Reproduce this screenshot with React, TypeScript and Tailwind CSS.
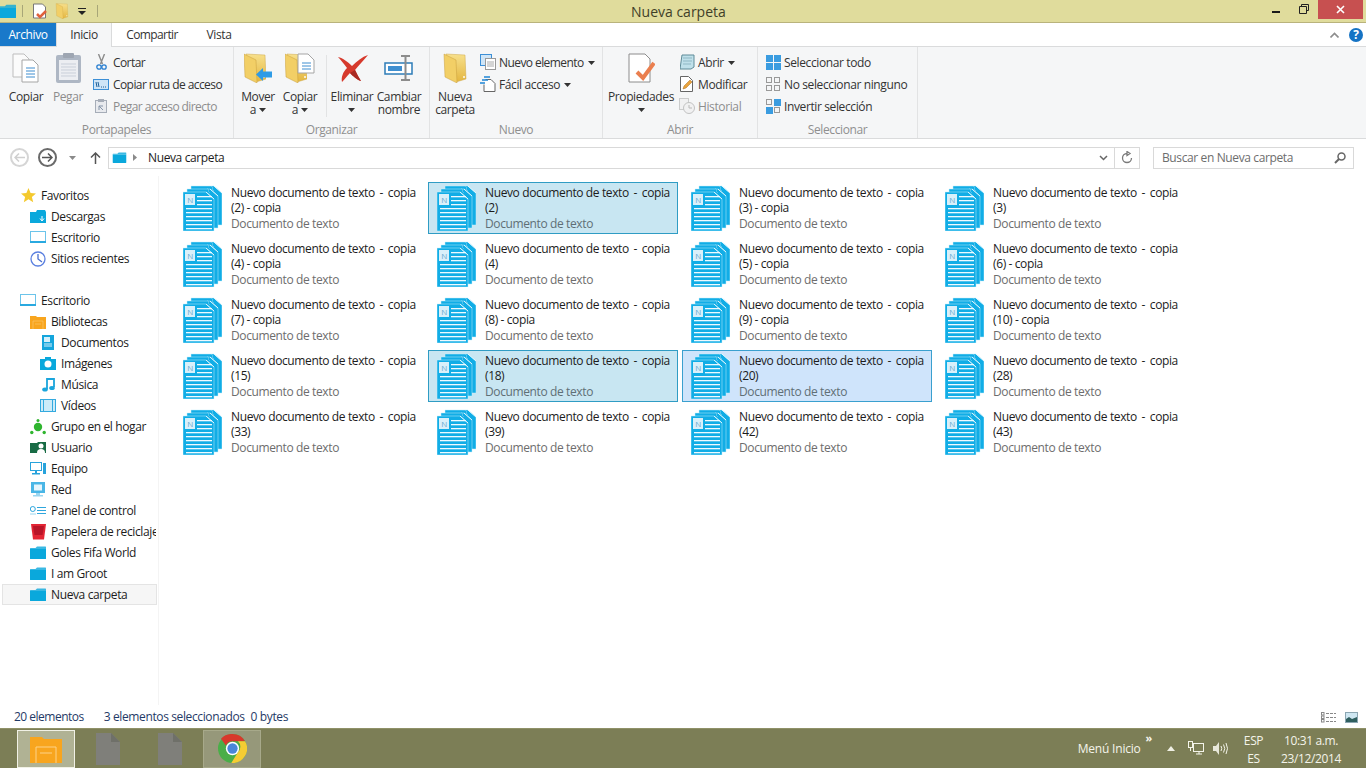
import React, { useId } from "react";

const F = "font-['Open_Sans','Noto_Sans',sans-serif] tracking-[-0.38px]";

function Caret({ c = "#333" }: { c?: string }) {
  return (
    <svg width="7" height="4" viewBox="0 0 7 4" className="inline-block shrink-0">
      <path d="M0 0h7L3.5 4z" fill={c} />
    </svg>
  );
}

function Folder({ w = 16, h = 13, c = "#0aa8dc" }: { w?: number; h?: number; c?: string }) {
  return (
    <svg width={w} height={h} viewBox="0 0 16 13" className="shrink-0">
      <path d="M0 2.5Q0 2 .5 2H5.5L7 .5h8.5q.5 0 .5.5V3H0z" fill={c} opacity=".8" />
      <path d="M0 3h16v9.5q0 .5-.5.5H.5Q0 13 0 12.5z" fill={c} />
    </svg>
  );
}

function YellowFolder({ w = 22, h = 30 }: { w?: number; h?: number }) {
  const id = useId();
  return (
    <svg width={w} height={h} viewBox="0 0 22 30">
      <defs>
        <linearGradient id={id} x1="0" y1="0" x2="0" y2="1">
          <stop offset="0" stopColor="#f7e08c" />
          <stop offset="1" stopColor="#e4b640" />
        </linearGradient>
      </defs>
      <path d="M2 1 21 2 22 26 12 29z" fill={`url(#${id})`} stroke="#cfa84a" strokeWidth=".5" />
      <path d="M0 1 12 7 13 30 1 24z" fill="#f2cf66" stroke="#c99f3f" strokeWidth=".5" />
      <path d="M19 23h2v2h-2z" fill="#fff" opacity=".7" />
    </svg>
  );
}

function DocStack() {
  const blue = "#11ade6";
  const sheet = (dx: number, dy: number, key: string) => (
    <path
      key={key}
      d={`M${dx} ${dy + 1}H${dx + 23}L${dx + 31} ${dy + 8}V${dy + 40}H${dx}z`}
      fill={blue}
      stroke="#c4ecfa"
      strokeWidth=".5"
    />
  );
  return (
    <svg width="39" height="46" viewBox="0 0 39 46" className="shrink-0">
      {sheet(8, 0, "a")}
      {sheet(4, 3, "b")}
      {sheet(0, 6, "c")}
      <path d="M23 7 31 14M27 4 35 11M31 1 39 8" stroke="#e6f8fe" strokeWidth="1" />
      <path d="M24 3l2 2-1 1 2 2M28 1l2 2-1 1 2 2" stroke="#7fd0ee" strokeWidth=".6" fill="none" />
      <rect x="2" y="9" width="10" height="11" fill="#d9f0fa" />
      <text x="7" y="17.800" textAnchor="middle" fontSize="8" fill="#6aa9cf" fontFamily="Open Sans">N</text>
      {[11, 15, 19].map((y) => (
        <rect key={y} x="14" y={y} width="15" height="1.300" fill="#eefaff" />
      ))}
      {[23, 27, 31, 35, 39, 43].map((y) => (
        <rect key={y} x="3" y={y} width="26" height="1.300" fill="#eefaff" />
      ))}
    </svg>
  );
}

function Item({ sub, selected, hot }: { sub: string; selected?: boolean; hot?: boolean }) {
  const cls = hot
    ? "border-[#3aa0cf] bg-[#cfe4fb]"
    : selected
      ? "border-[#2f9cc4] bg-[#c8e6f2]"
      : "border-transparent";
  return (
    <div className={`flex h-[52px] w-[250px] items-start border pl-[8px] pt-[1px] ${cls}`}>
      <div className="mt-[1px] h-[48px] w-[48px] shrink-0">
        <DocStack />
      </div>
      <div className="mt-[1px] flex flex-col text-[12px] leading-[15px] text-[#1c1c1c]">
        <span className="whitespace-nowrap">
          Nuevo documento de texto <span className="mx-[2px]">-</span> copia
        </span>
        <span className="whitespace-nowrap">{sub}</span>
        <span className={`mt-[1px] whitespace-nowrap ${selected || hot ? "text-[#5f6f76]" : "text-[#6d6d6d]"}`}>Documento de texto</span>
      </div>
    </div>
  );
}

const items: { sub: string; s?: boolean; h?: boolean }[] = [
  { sub: "(2) - copia" },
  { sub: "(2)", s: true },
  { sub: "(3) - copia" },
  { sub: "(3)" },
  { sub: "(4) - copia" },
  { sub: "(4)" },
  { sub: "(5) - copia" },
  { sub: "(6) - copia" },
  { sub: "(7) - copia" },
  { sub: "(8) - copia" },
  { sub: "(9) - copia" },
  { sub: "(10) - copia" },
  { sub: "(15)" },
  { sub: "(18)", s: true },
  { sub: "(20)", h: true },
  { sub: "(28)" },
  { sub: "(33)" },
  { sub: "(39)" },
  { sub: "(42)" },
  { sub: "(43)" },
];

function Large({
  icon,
  lines,
  inlineCaret,
  belowCaret,
  w,
  dim,
}: {
  icon: React.ReactNode;
  lines: string[];
  inlineCaret?: boolean;
  belowCaret?: boolean;
  w: number;
  dim?: boolean;
}) {
  return (
    <div className="flex shrink-0 flex-col items-center" style={{ width: w }}>
      <div className="flex h-[34px] items-center justify-center">{icon}</div>
      <div className={`mt-[5px] flex flex-col items-center text-[12px] leading-[13px] ${dim ? "text-[#8d8d8d]" : "text-[#333]"}`}>
        {lines.map((l, i) => (
          <span key={i} className="flex items-center gap-[3px] whitespace-nowrap">
            {l}
            {inlineCaret && i === lines.length - 1 ? <Caret /> : null}
          </span>
        ))}
        {belowCaret ? (
          <span className="flex h-[13px] items-center">
            <Caret />
          </span>
        ) : null}
      </div>
    </div>
  );
}

function Small({ icon, label, dim, caret, gap, tight }: { icon: React.ReactNode; label: string; dim?: boolean; caret?: boolean; gap?: boolean; tight?: boolean }) {
  return (
    <div className={`flex h-[22px] items-center whitespace-nowrap text-[12px] ${gap ? "gap-[4px]" : "gap-[3px]"} ${dim ? "text-[#8d8d8d]" : "text-[#333]"}`}>
      <span className="flex w-[16px] shrink-0 items-center justify-center">{icon}</span>
      <span className={`pt-[1px] ${tight ? "tracking-[-0.58px]" : ""}`}>{label}</span>
      {caret ? (
        <span className="ml-[1px] flex pt-[1px]">
          <Caret />
        </span>
      ) : null}
    </div>
  );
}

function Group({ w, label, children }: { w: number; label: string; children: React.ReactNode }) {
  return (
    <div className="flex h-full shrink-0 flex-col border-r border-[#e2e3e4]" style={{ width: w }}>
      <div className="flex h-[75px] pt-[4px]">{children}</div>
      <div className="text-center text-[12px] leading-[15px] text-[#8f8f8f]">{label}</div>
    </div>
  );
}

const IconCopy = (
  <svg width="28" height="30" viewBox="0 0 28 30">
    <path d="M1 1h11l5 5v18H1z" fill="#fbfbfb" stroke="#bdbdbd" />
    <path d="M10 7h11l5 5v17H10z" fill="#fff" stroke="#a5a5a5" />
    <path d="M14 15h9M14 18h9M14 21h9M14 24h9" stroke="#3e8ed0" strokeWidth="1.200" />
  </svg>
);
const IconPaste = (
  <svg width="25" height="30" viewBox="0 0 25 30">
    <rect x="0" y="2" width="25" height="28" rx="2" fill="#aeb7c4" />
    <rect x="3" y="7" width="19" height="20" fill="#eceef2" />
    <rect x="7" y="0" width="11" height="5" rx="1" fill="#9ea6b2" />
    <path d="M5 11h15M5 14h15M5 17h15M5 20h15M5 23h15" stroke="#c9cfd9" />
  </svg>
);
const IconScissors = (
  <svg width="11" height="16" viewBox="0 0 11 16">
    <path d="M2.500 0l4 10M8.500 0L4.500 10" stroke="#8c8c8c" strokeWidth="1.400" />
    <circle cx="3" cy="13" r="2.200" fill="none" stroke="#2a7fd0" strokeWidth="1.300" />
    <circle cx="8" cy="13" r="2.200" fill="none" stroke="#2a7fd0" strokeWidth="1.300" />
  </svg>
);
const IconPath = (
  <svg width="16" height="11" viewBox="0 0 16 11">
    <rect x=".5" y=".5" width="15" height="10" fill="#cfe5f7" stroke="#3c8fd6" />
    <path d="M3 3l1 5M5 3l1 5M8 8h1M10 8h1M12 8h1" stroke="#1e5f98" />
  </svg>
);
const IconPasteShort = (
  <svg width="12" height="14" viewBox="0 0 12 14">
    <rect x=".5" y="1.500" width="11" height="12" fill="#e8eaee" stroke="#a6adb8" />
    <rect x="3" y="0" width="6" height="3" fill="#a6adb8" />
    <path d="M4 11V7h4M4 7l4 4" stroke="#8494a8" fill="none" />
  </svg>
);
const IconMove = (
  <div className="relative h-[30px] w-[28px]">
    <YellowFolder />
    <svg width="16" height="13" viewBox="0 0 16 13" className="absolute bottom-[2px] right-0">
      <path d="M0 6.500 7 0V3.500H16V9.500H7V13z" fill="#2e9be6" />
    </svg>
  </div>
);
const IconCopyTo = (
  <div className="relative h-[30px] w-[30px]">
    <YellowFolder />
    <svg width="18" height="21" viewBox="0 0 18 21" className="absolute right-0 top-0">
      <path d="M1 1h10l6 6v13H1z" fill="#fff" stroke="#a5a5a5" />
      <path d="M5 10h9M5 13h9M5 16h9" stroke="#3e8ed0" />
    </svg>
  </div>
);
const IconDelete = (
  <svg width="31" height="27" viewBox="0 0 31 27">
    <path d="M1 2C6 3 11 7 15 11 20 6 25 2 31 0 27 5 22 10 18 15 20 19 22 23 24 26 20 25 16 21 13 18 10 21 8 24 5 27 4 22 6 17 10 13 7 9 4 5 1 2z" fill="#d6392c" />
    <path d="M13 18C16 21 20 25 24 26 22 23 20 19 18 15z" fill="#a92a22" />
  </svg>
);
const IconRename = (
  <svg width="30" height="26" viewBox="0 0 30 26">
    <rect x="1" y="8" width="27" height="11" fill="#fff" stroke="#2d7cb8" strokeWidth="1.500" />
    <rect x="4" y="11" width="14" height="5" fill="#3f8fd0" />
    <path d="M17 1h9M17 25h9M21.500 1v24" stroke="#8c8c8c" strokeWidth="2" />
  </svg>
);
const IconNewItem = (
  <svg width="16" height="16" viewBox="0 0 16 16">
    <rect x=".5" y=".5" width="11" height="11" fill="#cfe5f7" stroke="#3c8fd6" />
    <rect x="5.500" y="4.500" width="10" height="11" fill="#fff" stroke="#999" />
    <path d="M7 8h7M7 10h7M7 12h7" stroke="#aaa" />
  </svg>
);
const IconEasy = (
  <svg width="16" height="16" viewBox="0 0 16 16">
    <path d="M5.500 3.500H11l4 4v8H4v-7" fill="#fff" stroke="#666" />
    <path d="M0 7h5M2 4h6M4 1h6" stroke="#1f86d6" strokeWidth="1.300" />
  </svg>
);
const IconProps = (
  <svg width="27" height="30" viewBox="0 0 27 30">
    <path d="M1 1h16l5 5v23H1z" fill="#fff" stroke="#8c8c8c" />
    <path d="M9 19l6 6L26 10" fill="none" stroke="#ea7f4f" strokeWidth="4" />
  </svg>
);
const IconOpen = (
  <svg width="15" height="16" viewBox="0 0 15 16">
    <path d="M2 1h12v12L11 15H0z" fill="#bfe0ea" stroke="#5f8b98" />
    <path d="M3 4h9M3 7h9M3 10h8" stroke="#8fb7c4" />
  </svg>
);
const IconEdit = (
  <svg width="14" height="16" viewBox="0 0 14 16">
    <path d="M.5.500h8l4 4v11H.5z" fill="#fff" stroke="#666" />
    <path d="M3 13l1-3 6-6 2 2-6 6z" fill="#e9a33d" stroke="#a96c1e" strokeWidth=".5" />
  </svg>
);
const IconHistory = (
  <svg width="16" height="16" viewBox="0 0 16 16" opacity=".55">
    <rect x=".5" y=".5" width="9" height="11" fill="#eee" stroke="#aaa" />
    <circle cx="10" cy="10" r="5.500" fill="#eee" stroke="#999" />
    <path d="M10 7v3h3" stroke="#888" fill="none" />
  </svg>
);
function Grid4({ filled }: { filled: number[] }) {
  const pos = [
    [0, 0],
    [8, 0],
    [0, 8],
    [8, 8],
  ];
  return (
    <svg width="15" height="15" viewBox="0 0 15 15">
      {pos.map(([x, y], i) =>
        filled.includes(i) ? (
          <rect key={i} x={x} y={y} width="7" height="7" fill="#3a9ce0" />
        ) : (
          <rect key={i} x={x + 0.5} y={y + 0.5} width="5" height="5" fill="none" stroke="#999" />
        ),
      )}
    </svg>
  );
}

function SideRow({ level, icon, label, sel }: { level: 0 | 1 | 2; icon: React.ReactNode; label: string; sel?: boolean }) {
  const pad = level === 0 ? "pl-[17px]" : level === 1 ? "pl-[27px]" : "pl-[37px]";
  return (
    <div className={`ml-[2px] flex h-[21px] w-[155px] items-center overflow-hidden border ${pad} ${sel ? "border-[#e4e4e4] bg-[#f6f6f6]" : "border-transparent"}`}>
      <span className="flex w-[16px] shrink-0 items-center justify-center">{icon}</span>
      <span className="ml-[5px] whitespace-nowrap pt-[1px] text-[12px] text-[#1c1c1c]">{label}</span>
    </div>
  );
}

const Star = (
  <svg width="15" height="15" viewBox="0 0 15 15">
    <path d="M7.500 0l2.100 5 5.400.4-4.100 3.500 1.300 5.300-4.700-2.900-4.700 2.900 1.300-5.300L0 5.400 5.400 5z" fill="#f4c92e" />
  </svg>
);
const Monitor = (
  <svg width="16" height="13" viewBox="0 0 16 13">
    <rect x=".5" y=".5" width="15" height="11" fill="#fff" stroke="#6cc4ea" />
    <rect x="0" y="10" width="16" height="2" fill="#29a9e0" />
  </svg>
);
const Downloads = (
  <svg width="16" height="13" viewBox="0 0 16 13">
    <path d="M0 2h6l1-2h8l1 2v11H0z" fill="#0aa8dc" />
    <path d="M12 6v4M10 8.500l2 2.500 2-2.500" stroke="#fff" fill="none" />
  </svg>
);
const Clock = (
  <svg width="16" height="16" viewBox="0 0 16 16">
    <circle cx="8" cy="8" r="7" fill="#fff" stroke="#5b80e0" strokeWidth="1.300" />
    <path d="M8 3v5l4 3" fill="none" stroke="#4a6fd0" strokeWidth="1.300" />
  </svg>
);
const Docs = (
  <svg width="12" height="15" viewBox="0 0 12 15">
    <path d="M0 0h12v15H0z" fill="#14a5dc" />
    <rect x="2" y="2" width="6" height="5" fill="#d5f0fb" />
    <path d="M2 9h8M2 11h8" stroke="#d5f0fb" />
  </svg>
);
const Images = (
  <svg width="16" height="13" viewBox="0 0 16 13">
    <path d="M0 2h5V0h6v2h5v11H0z" fill="#0aa8dc" />
    <circle cx="8" cy="7" r="3.500" fill="#fff" />
  </svg>
);
const Music = (
  <svg width="13" height="15" viewBox="0 0 13 15">
    <path d="M5 12V2h7v8" fill="none" stroke="#1aa5dc" strokeWidth="1.800" />
    <ellipse cx="3" cy="12.500" rx="2.800" ry="2" fill="#1aa5dc" />
    <ellipse cx="10" cy="11" rx="2.800" ry="2" fill="#1aa5dc" />
  </svg>
);
const Video = (
  <svg width="16" height="13" viewBox="0 0 16 13">
    <rect x=".5" y=".5" width="15" height="12" fill="#cdebf8" stroke="#34aadf" />
    <path d="M3.500 1v11M12.500 1v11" stroke="#34aadf" />
  </svg>
);
const Home = (
  <svg width="16" height="16" viewBox="0 0 16 16">
    <circle cx="8" cy="8" r="4.200" fill="#2fb52f" />
    <circle cx="8" cy="1.500" r="1.500" fill="#2fb52f" />
    <circle cx="1.800" cy="13.500" r="1.700" fill="#2fb52f" />
    <circle cx="14.200" cy="13.500" r="1.700" fill="#2fb52f" />
  </svg>
);
const User = (
  <svg width="16" height="13" viewBox="0 0 16 13">
    <path d="M0 2h7l1-1h8v11H0z" fill="#186b45" />
    <circle cx="11" cy="5" r="2.500" fill="#fff" />
    <path d="M7 12c0-3 1.500-4 4-4s4 1 4 4z" fill="#fff" />
  </svg>
);
const Computer = (
  <svg width="16" height="14" viewBox="0 0 16 14">
    <rect x=".5" y=".5" width="11" height="8" fill="#fff" stroke="#28a3dc" />
    <path d="M2 11h8v1.500H2zM5 9h2v2H5z" fill="#28a3dc" />
    <rect x="13" y="1" width="3" height="11" fill="#28a3dc" />
  </svg>
);
const Net = (
  <svg width="14" height="15" viewBox="0 0 14 15">
    <rect x="0" y="0" width="14" height="11" fill="#4ab6e6" />
    <rect x="3" y="2.500" width="8" height="6" fill="#e6f5fc" />
    <path d="M5 11h4v2H5zM2 13h10v1.500H2z" fill="#9bd6f0" />
  </svg>
);
const Panel = (
  <svg width="16" height="9" viewBox="0 0 16 9">
    <circle cx="2.800" cy="3" r="2.500" fill="#fff" stroke="#2ea6dd" />
    <path d="M0 8h6" stroke="#9bd6f0" />
    <path d="M7 1.500h9M7 4.500h9M7 7.500h9" stroke="#2ea6dd" strokeWidth="1.200" />
  </svg>
);
const Trash = (
  <svg width="15" height="16" viewBox="0 0 15 16">
    <path d="M0 0h15l-2 15.500H2z" fill="#e32534" />
    <path d="M2 2h11l-1.500 9h-8z" fill="#b81528" />
  </svg>
);
function LibFolder({ w = 16, h = 14 }: { w?: number; h?: number }) {
  return (
    <svg width={w} height={h} viewBox="0 0 16 14">
      <path d="M0 1h6l1 1h9v12H0z" fill="#f8a51e" />
      <path d="M3 6h10v8M3 6v8M5 9h6" fill="none" stroke="#fdd287" strokeWidth=".5" />
    </svg>
  );
}

function GrayDoc() {
  return (
    <svg width="24" height="32" viewBox="0 0 24 32">
      <path d="M0 0H15L24 9V32H0z" fill="#7f7f7a" />
      <path d="M15 0 24 9H15z" fill="#6f7069" />
    </svg>
  );
}

function Chrome() {
  return (
    <svg width="29" height="29" viewBox="0 0 48 48">
      <circle cx="24" cy="24" r="24" fill="#4aae48" />
      <path d="M24 0A24 24 0 0 1 44.800 12H24a12 12 0 0 0-11 7L5 8A24 24 0 0 1 24 0z" fill="#d8382c" />
      <path d="M44.800 12A24 24 0 0 1 22 48L33 30a12 12 0 0 0 0-18z" fill="#f5cc33" />
      <circle cx="24" cy="24" r="11" fill="#fff" />
      <circle cx="24" cy="24" r="8.500" fill="#4a86d8" />
    </svg>
  );
}

export default function App() {
  return (
    <div className={`flex h-[768px] w-[1366px] flex-col overflow-hidden bg-white ${F}`}>
      {/* title bar */}
      <div className="relative flex h-[23px] shrink-0 items-center border-b border-[#b9b37c] bg-[#e0dc9c]">
        <div className="flex items-center">
          <span className="-ml-[1px] flex">
            <Folder w={17} h={14} />
          </span>
          <span className="ml-[6px] h-[12px] w-px bg-[#a8a678]" />
          <svg width="16" height="16" viewBox="0 0 16 16" className="ml-[9px]">
            <path d="M1.500 1h9l3 3v11h-12z" fill="#fff" stroke="#777" />
            <path d="M5 11l3 3 6-6" stroke="#e0623c" strokeWidth="2.500" fill="none" />
          </svg>
          <span className="ml-[7px] flex">
            <YellowFolder w={14} h={16} />
          </span>
          <svg width="8" height="7" viewBox="0 0 8 7" className="ml-[9px]">
            <path d="M0 0h8v1H0zM0 3h8L4 7z" fill="#222" />
          </svg>
          <span className="ml-[11px] h-[12px] w-px bg-[#a8a678]" />
        </div>
        <div className="absolute left-[631px] top-[2px] text-[14px] leading-[19px] tracking-normal text-[#3f3f28]">Nueva carpeta</div>
        <div className="ml-auto mr-[3px] flex h-[19px] items-start self-start">
          <span className="mr-[19px] mt-[11px] h-[2px] w-[8px] bg-[#1a1a1a]" />
          <svg width="10" height="10" viewBox="0 0 10 10" className="mr-[9px] mt-[4px]">
            <path d="M2.500 2.500V.5h7v6h-2M.5 2.500h7v7h-7z" fill="none" stroke="#222" />
          </svg>
          <div className="flex h-[19px] w-[45px] items-center justify-center bg-[#c75050]">
            <svg width="9" height="9" viewBox="0 0 9 9">
              <path d="M1 1l7 7M8 1L1 8" stroke="#fff" strokeWidth="1.600" />
            </svg>
          </div>
        </div>
      </div>
      {/* tabs */}
      <div className="relative flex h-[24px] shrink-0 items-stretch border-b border-[#dadbdc] bg-white text-[12px]">
        <div className="flex h-[23px] w-[56px] items-center justify-center bg-[#1979ca] pt-[1px] text-white">Archivo</div>
        <div className="relative z-10 flex h-[24px] w-[56px] items-center justify-center border-x border-[#dadbdc] bg-[#f5f6f7] text-[#333]">Inicio</div>
        <div className="flex w-[80px] items-center justify-center tracking-[-0.6px] text-[#333]">Compartir</div>
        <div className="flex w-[54px] items-center justify-center text-[#333]">Vista</div>
        <div className="ml-auto mr-[3px] flex items-center gap-[10px]">
          <svg width="9" height="6" viewBox="0 0 9 6">
            <path d="M.5 5.500l4-4 4 4" fill="none" stroke="#8d8d8d" strokeWidth="1.600" />
          </svg>
          <div className="flex h-[14px] w-[14px] items-center justify-center rounded-full bg-[#1573c4] text-[12px] font-bold leading-none text-white">?</div>
        </div>
      </div>
      {/* ribbon */}
      <div className="flex h-[92px] shrink-0 border-b border-[#dadbdc] bg-[#f5f6f7]">
        <Group w={234} label="Portapapeles">
          <div className="ml-[10px] flex">
            <Large w={32} icon={IconCopy} lines={["Copiar"]} />
          </div>
          <div className="ml-[10px] flex">
            <Large w={32} dim icon={IconPaste} lines={["Pegar"]} />
          </div>
          <div className="ml-[9px] flex flex-col">
            <Small gap tight icon={IconScissors} label="Cortar" />
            <Small gap tight icon={IconPath} label="Copiar ruta de acceso" />
            <Small gap tight dim icon={IconPasteShort} label="Pegar acceso directo" />
          </div>
        </Group>
        <Group w={196} label="Organizar">
          <div className="ml-[6px] flex">
            <Large w={36} icon={IconMove} lines={["Mover", "a"]} inlineCaret />
            <div className="ml-[1px]">
              <Large w={46} icon={IconCopyTo} lines={["Copiar", "a"]} inlineCaret />
            </div>
            <div className="my-[4px] ml-[3px] h-[62px] w-px bg-[#e2e3e4]" />
            <div className="ml-[3px]">
              <Large w={44} icon={IconDelete} lines={["Eliminar"]} belowCaret />
            </div>
            <Large w={50} icon={IconRename} lines={["Cambiar", "nombre"]} />
          </div>
        </Group>
        <Group w={173} label="Nuevo">
          <div className="ml-[6px] flex">
            <Large w={38} icon={<YellowFolder w={24} h={30} />} lines={["Nueva", "carpeta"]} />
          </div>
          <div className="ml-[6px] flex flex-col">
            <Small tight icon={IconNewItem} label="Nuevo elemento" caret />
            <Small icon={IconEasy} label="Fácil acceso" caret />
          </div>
        </Group>
        <Group w={155} label="Abrir">
          <div className="ml-[6px] flex">
            <Large w={64} icon={IconProps} lines={["Propiedades"]} belowCaret />
          </div>
          <div className="ml-[6px] flex flex-col">
            <Small icon={IconOpen} label="Abrir" caret />
            <Small icon={IconEdit} label="Modificar" />
            <Small dim icon={IconHistory} label="Historial" />
          </div>
        </Group>
        <Group w={160} label="Seleccionar">
          <div className="ml-[7px] flex flex-col">
            <Small icon={<Grid4 filled={[0, 1, 2, 3]} />} label="Seleccionar todo" />
            <Small icon={<Grid4 filled={[]} />} label="No seleccionar ninguno" />
            <Small icon={<Grid4 filled={[1, 2]} />} label="Invertir selección" />
          </div>
        </Group>
      </div>
      {/* address */}
      <div className="flex h-[37px] shrink-0 items-center">
        <div className="ml-[10px] flex h-[19px] w-[19px] items-center justify-center rounded-full border-2 border-[#d5d5d5]">
          <svg width="11" height="9" viewBox="0 0 11 9">
            <path d="M5 .5 1 4.500l4 4M1 4.500h10" fill="none" stroke="#cfcfcf" strokeWidth="1.500" />
          </svg>
        </div>
        <div className="ml-[9px] flex h-[19px] w-[19px] items-center justify-center rounded-full border-2 border-[#6a6a6a]">
          <svg width="11" height="9" viewBox="0 0 11 9">
            <path d="M6 .5l4 4-4 4M10 4.500H0" fill="none" stroke="#555" strokeWidth="1.500" />
          </svg>
        </div>
        <span className="ml-[12px] flex">
          <Caret c="#8a8a8a" />
        </span>
        <svg width="11" height="12" viewBox="0 0 11 12" className="ml-[14px]">
          <path d="M5.500 12V1M1 5.500l4.500-4.500 4.500 4.500" fill="none" stroke="#555" strokeWidth="1.500" />
        </svg>
        <div className="ml-[7px] flex h-[22px] w-[1032px] items-center border border-[#d9d9d9]">
          <span className="ml-[2px] flex">
            <Folder w={17} h={11} />
          </span>
          <svg width="4" height="7" viewBox="0 0 4 7" className="ml-[5px]">
            <path d="M0 0l4 3.500L0 7z" fill="#8a8a8a" />
          </svg>
          <span className="ml-[11px] text-[12px] text-[#1c1c1c]">Nueva carpeta</span>
          <svg width="9" height="6" viewBox="0 0 9 6" className="ml-auto mr-[6px]">
            <path d="M1 1l3.500 3.500L8 1" fill="none" stroke="#666" strokeWidth="1.500" />
          </svg>
          <div className="flex h-full w-[25px] items-center justify-center border-l border-[#d9d9d9]">
            <svg width="12" height="13" viewBox="0 0 12 13">
              <path d="M6 2.500A4.500 4.500 0 1 0 10.500 7M6 .5v4l3-2z" fill="none" stroke="#7a7a7a" strokeWidth="1.300" />
            </svg>
          </div>
        </div>
        <div className="ml-[13px] flex h-[22px] w-[201px] items-center border border-[#d9d9d9]">
          <span className="ml-[8px] text-[12px] text-[#6d6d6d]">Buscar en Nueva carpeta</span>
          <svg width="12" height="12" viewBox="0 0 12 12" className="ml-auto mr-[7px]">
            <circle cx="7.500" cy="4.500" r="3.500" fill="none" stroke="#666" strokeWidth="1.500" />
            <path d="M5 7l-4 4" stroke="#666" strokeWidth="2" />
          </svg>
        </div>
      </div>
      {/* main */}
      <div className="flex min-h-0 flex-1">
        <div className="flex w-[159px] shrink-0 flex-col border-r border-[#f4f4f4] pt-[9px]">
          <SideRow level={0} icon={Star} label="Favoritos" />
          <SideRow level={1} icon={Downloads} label="Descargas" />
          <SideRow level={1} icon={Monitor} label="Escritorio" />
          <SideRow level={1} icon={Clock} label="Sitios recientes" />
          <div className="h-[21px]" />
          <SideRow level={0} icon={Monitor} label="Escritorio" />
          <SideRow level={1} icon={<LibFolder />} label="Bibliotecas" />
          <SideRow level={2} icon={Docs} label="Documentos" />
          <SideRow level={2} icon={Images} label="Imágenes" />
          <SideRow level={2} icon={Music} label="Música" />
          <SideRow level={2} icon={Video} label="Vídeos" />
          <SideRow level={1} icon={Home} label="Grupo en el hogar" />
          <SideRow level={1} icon={User} label="Usuario" />
          <SideRow level={1} icon={Computer} label="Equipo" />
          <SideRow level={1} icon={Net} label="Red" />
          <SideRow level={1} icon={Panel} label="Panel de control" />
          <SideRow level={1} icon={Trash} label="Papelera de reciclaje" />
          <SideRow level={1} icon={<Folder />} label="Goles Fifa World" />
          <SideRow level={1} icon={<Folder />} label="I am Groot" />
          <SideRow level={1} icon={<Folder />} label="Nueva carpeta" sel />
        </div>
        <div className="flex-1 pl-[15px] pt-[6px]">
          <div className="grid grid-cols-[repeat(4,250px)] gap-[4px]">
            {items.map((it, i) => (
              <Item key={i} sub={it.sub} selected={it.s} hot={it.h} />
            ))}
          </div>
        </div>
      </div>
      {/* status */}
      <div className="flex h-[23px] shrink-0 items-center pt-[1px] text-[12px] text-[#1f3a66]">
        <span className="ml-[14px] tracking-[-0.5px]">20 elementos</span>
        <span className="ml-[20px]">3 elementos seleccionados</span>
        <span className="ml-[6px]">0 bytes</span>
        <svg width="15" height="11" viewBox="0 0 15 11" className="ml-auto">
          <path d="M5 1.500h10M5 5.500h10M5 9.500h10" stroke="#888" strokeDasharray="3 1" />
          <rect x=".5" y=".5" width="2.500" height="2.500" fill="none" stroke="#888" />
          <rect x=".5" y="4" width="2.500" height="2.500" fill="none" stroke="#888" />
          <rect x=".5" y="7.500" width="2.500" height="2.500" fill="none" stroke="#888" />
        </svg>
        <svg width="13" height="11" viewBox="0 0 13 11" className="ml-[9px] mr-[8px]">
          <rect x=".5" y=".5" width="12" height="10" fill="#cfe7f2" stroke="#8ca6b2" />
          <path d="M1 7l3-2 3 2 5-2v5H1z" fill="#2f5f5f" />
        </svg>
      </div>
      {/* taskbar */}
      <div className="flex h-[40px] shrink-0 items-center border-t border-[#8f9168] bg-[#7c7e56] pr-[26px] text-[12px] text-[#f4f4ea]">
        <div className="ml-[17px] flex h-[38px] w-[58px] items-center justify-center border border-[#f1f1e6] bg-[#b0b294]">
          <LibFolder w={32} h={28} />
        </div>
        <div className="ml-[21px] flex w-[24px] justify-center">
          <GrayDoc />
        </div>
        <div className="ml-[38px] flex w-[24px] justify-center">
          <GrayDoc />
        </div>
        <div className="ml-[21px] flex h-[38px] w-[58px] items-center justify-center border border-[#a7a98a] bg-[#96987a]">
          <Chrome />
        </div>
        <div className="relative ml-auto flex items-center">
          <span className="text-[12px] tracking-[-0.2px]">Menú Inicio</span>
          <span className="-mt-[22px] ml-[5px] text-[11px] font-bold leading-none">»</span>
          <svg width="8" height="5" viewBox="0 0 8 5" className="ml-[15px]">
            <path d="M0 5 4 0l4 5z" fill="#f0f0e4" />
          </svg>
          <svg width="16" height="15" viewBox="0 0 16 15" className="ml-[13px]">
            <rect x="5.500" y="2.500" width="10" height="8" fill="none" stroke="#f4f4ea" />
            <rect x=".5" y=".5" width="4" height="6" fill="#7c7e56" stroke="#f4f4ea" />
            <path d="M2.500 7v3M8 13h6M11 11v2" stroke="#f4f4ea" />
          </svg>
          <svg width="15" height="13" viewBox="0 0 15 13" className="ml-[9px]">
            <path d="M0 4h3l3-4v13l-3-4H0z" fill="#e8e8da" />
            <path d="M8 4q1.500 2.500 0 5M10.500 2.500q2.500 4 0 8M13 1q3 5.500 0 11" fill="none" stroke="#f4f4ea" />
          </svg>
          <div className="ml-[16px] mt-[2px] flex w-[19px] flex-col items-center leading-[18px]">
            <span>ESP</span>
            <span>ES</span>
          </div>
          <div className="ml-[19px] mt-[2px] flex w-[58px] flex-col items-center leading-[18px]">
            <span>10:31 a.m.</span>
            <span>23/12/2014</span>
          </div>
        </div>
      </div>
    </div>
  );
}
